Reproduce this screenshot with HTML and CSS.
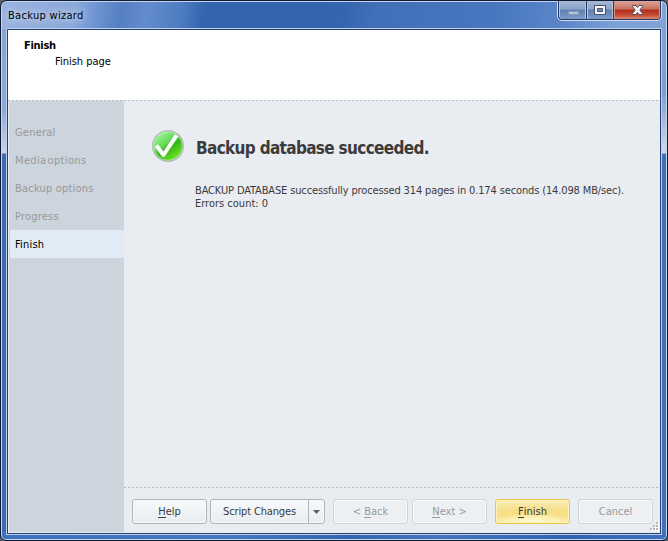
FILE: index.html
```html
<!DOCTYPE html>
<html lang="en">
<head>
<meta charset="utf-8">
<title>Backup wizard</title>
<link rel="stylesheet" href="styles.css">
</head>
<body>
<div class="window">
  <div class="titlebar">
    <span class="caption">Backup wizard</span>
    <div class="controls">
      <span class="control minimize"><svg width="29" height="19" viewBox="0 0 29 19"><rect x="10.500" y="10.500" width="10" height="3" fill="#b7c4d7" stroke="#8296b5"/></svg></span>
      <span class="control maximize"><svg width="26" height="19" viewBox="0 0 26 19"><path fill="#f4f5f7" stroke="#48526b" fill-rule="evenodd" d="M7.500 4.500h11v9h-11zM10.500 7.500h5v3h-5z"/></svg></span>
      <span class="control close"><svg width="46" height="19" viewBox="0 0 46 19"><path fill="#f7f7f7" stroke="#59485a" d="M18.500 4.500h3.500l1.500 2 1.500-2h3.500v1l-2.700 3.500 2.700 3.500v1H25l-1.500-2-1.500 2h-3.500v-1l2.700-3.500-2.700-3.500z"/></svg></span>
    </div>
  </div>
  <div class="client">
    <header class="header">
      <h1>Finish</h1>
      <p>Finish page</p>
    </header>
    <div class="body">
      <nav class="steps">
        <div class="step">General</div>
        <div class="step media">Media options</div>
        <div class="step">Backup options</div>
        <div class="step">Progress</div>
        <div class="step current">Finish</div>
      </nav>
      <main class="main">
        <section class="result">
          <svg class="status" width="34" height="34" viewBox="0 0 34 34">
            <defs>
              <linearGradient id="green" x1="0.1" y1="0" x2="0.8" y2="1">
                <stop offset="0" stop-color="#b0ffad"/>
                <stop offset="0.42" stop-color="#67da59"/>
                <stop offset="0.58" stop-color="#35b619"/>
                <stop offset="1" stop-color="#78f329"/>
              </linearGradient>
            </defs>
            <circle cx="17" cy="17" r="15.300" fill="url(#green)" stroke="#b4b9bb" stroke-width="1.300"/>
            <circle cx="17" cy="17" r="14.300" fill="none" stroke="#d2efd0" stroke-width="0.600"/>
            <path d="M6.500 18L12.500 26L24.500 8" fill="none" stroke="#fff" stroke-width="3.900" stroke-linejoin="round" stroke-linecap="square"/>
          </svg>
          <div class="message">
            <h2>Backup database succeeded.</h2>
            <p class="line">BACKUP DATABASE successfully processed 314 pages in 0.174 seconds (14.098 MB/sec).</p>
            <p>Errors count: 0</p>
          </div>
        </section>
        <footer class="footer">
          <div class="button"><span><u>H</u>elp</span></div>
          <div class="button split"><span class="script">Script Changes</span><span class="drop"><svg width="7" height="4" viewBox="0 0 7 4"><path d="M0 0h7L3.500 4z" fill="#59636e"/></svg></span></div>
          <div class="button disabled back"><span>&lt; <u>B</u>ack</span></div>
          <div class="button disabled next"><span><u>N</u>ext &gt;</span></div>
          <div class="button primary"><span><u>F</u>inish</span></div>
          <div class="button disabled cancel"><span>Cancel</span></div>
          <svg class="grip" width="9" height="9" viewBox="0 0 9 9"><path fill="#fff" d="M7 1h2v2H7zM4 4h2v2H4zM7 4h2v2H7zM1 7h2v2H1zM4 7h2v2H4zM7 7h2v2H7z"/><path fill="#b4b8bd" d="M6 0h2v2H6zM3 3h2v2H3zM6 3h2v2H6zM0 6h2v2H0zM3 6h2v2H3zM6 6h2v2H6z"/></svg>
        </footer>
      </main>
    </div>
  </div>
</div>
</body>
</html>
```
FILE: styles.css
```css
* { box-sizing: border-box; }
body {
  margin: 0;
  width: 668px;
  height: 541px;
  overflow: hidden;
  background: #5a6068;
  font: 11px/13px "DejaVu Sans Condensed", "DejaVu Sans", sans-serif;
  font-stretch: condensed;
  color: #3b3b3b;
}
h1, h2, p { margin: 0; white-space: nowrap; }
u { text-decoration: none; border-bottom: 1px solid currentColor; display: inline-block; height: 13px; }

.window {
  position: relative;
  width: 668px;
  height: 541px;
  border: 1px solid #101a34;
  border-radius: 7px 7px 6px 6px;
  padding: 0 6px 6px;
  box-shadow: inset 0 0 0 1px #c5d8f0;
  background:
    linear-gradient(90deg, #3f70bc, #4678c1 35%, #3364af 52%, #4475be 65%, #3263b0 85%, #3f70bc) 0 100% / 100% 8px no-repeat,
    linear-gradient(#8aa5d4 0, #8ca9d7 80px, #cbd3e7 124px, #3e6ab3 125px, #3e6ab3 100%) 0 28px / 7px 511px no-repeat,
    linear-gradient(#7fa0d4 0, #809fd0 65px, #d1d9e8 124px, #3f70ba 125px, #3f70ba 100%) 100% 28px / 7px 511px no-repeat,
    linear-gradient(100deg, #9ab3df 0, #8ba8da 75px, #6f95d2 95px, #557fc4 120px, #628ccd 145px, #4e7cc1 180px, #3364ad 202px, #3665af 340px, #416fb8 370px, #4877bf 490px, #5c87c9 560px, #7ca0d6 605px, #8cabd9 100%);
}
.titlebar { height: 28px; display: flex; justify-content: space-between; }
.caption {
  margin: 8px 0 0 1px;
  color: #000;
  letter-spacing: 0.3px;
  text-shadow: 0 0 6px #d3e0f5, 0 0 10px #c7d7f1;
}
.controls {
  display: flex;
  width: 105px;
  height: 20px;
  margin-right: -1px;
  border: 1px solid #d4def0;
  border-top: 0;
  border-radius: 0 0 5px 5px;
  overflow: hidden;
}
.control {
  height: 19px;
  border-right: 1px solid #25375f;
  border-bottom: 1px solid #25375f;
  box-shadow: inset 1px 0 #b8c6de, inset -1px 0 #b8c6de;
}
.control svg { display: block; }
.minimize, .maximize { background: linear-gradient(#a5b7d4 0, #8da4c9 45%, #6080b3 50%, #7e9bcb 100%); }
.minimize { width: 29px; border-left: 1px solid #25375f; border-radius: 0 0 0 4px; }
.minimize svg { margin-left: -1px; }
.maximize { width: 27px; }
.close {
  width: 47px;
  border-radius: 0 0 4px;
  background: linear-gradient(#dba39b 0, #c7705f 45%, #b22d19 50%, #c24b35 78%, #df8c72 100%);
  box-shadow: inset 1px 0 #d99486, inset -1px 0 #d99486;
}

.client {
  width: 654px;
  height: 505px;
  border: 1px solid #27416f;
  outline: 1px solid #bfd0ea;
  background: #e9ecf1;
}
.header { height: 70px; padding: 9px 0 0 16px; background: #fff; color: #000; }
.header h1 { font-size: 11px; line-height: 13px; letter-spacing: -0.3px; }
.header p { margin: 3px 0 0 31px; }
.body {
  display: flex;
  height: 433px;
  padding: 1px 0;
  background: repeating-linear-gradient(90deg, #b4b8bf 0 2px, #e9ecf1 2px 4px) 0 0 / 100% 1px no-repeat;
}
.steps { width: 115px; margin-left: 1px; padding-top: 17px; background: #ccd4dd; }
.step { height: 28px; margin-left: 1px; padding: 8px 0 0 5px; color: #999; white-space: nowrap; letter-spacing: 0.2px; }
.media { letter-spacing: 0.35px; word-spacing: -2.4px; }
.current { background: #e1ebf5; color: #000; }
.main { width: 536px; display: flex; flex-direction: column; justify-content: space-between; }
.result { display: flex; padding: 28px 0 0 27px; }
.message { margin-left: 10px; }
.message h2 { margin: 8px 0 0 1px; font-size: 17px; line-height: 22px; letter-spacing: -0.67px; }
.line { margin-top: 25px; letter-spacing: -0.135px; }
.footer {
  position: relative;
  display: flex;
  height: 45px;
  padding: 12px 0 0 8px;
  background: repeating-linear-gradient(90deg, #b4b8bf 0 2px, #e9ecf1 2px 4px) 0 0 / 100% 1px no-repeat;
}
.button {
  display: flex;
  align-items: center;
  justify-content: center;
  width: 75px;
  height: 25px;
  margin-right: 3px;
  border: 1px solid #b0b5ba;
  border-radius: 3px;
  background: linear-gradient(#f7fafc, #e9edef);
  box-shadow: inset 0 0 0 1px #f6f8fa;
  white-space: nowrap;
}
.split { width: 115px; margin-right: 8px; }
.script { width: 97px; text-align: center; letter-spacing: -0.15px; }
.drop { display: flex; width: 16px; height: 23px; align-items: center; justify-content: center; border-left: 1px solid #b0b5ba; }
.disabled { border-color: #d0d4d8; color: #999; background: #ecf0f3; }
.back { margin-right: 4px; }
.next { margin-right: 8px; }
.primary {
  margin-right: 8px;
  border-color: #ebc543;
  background:
    radial-gradient(ellipse 50% 45% at 50% 100%, #fffbe2 0, #fff5c2 40%, transparent 100%),
    linear-gradient(#fbeebd, #f6df8b 40%, #f6df86 65%, #fbeeb0);
  box-shadow: inset 0 0 0 1px #fff3bd;
}
.cancel { margin-right: 0; }
.grip { position: absolute; right: 1px; bottom: 1px; }
```
